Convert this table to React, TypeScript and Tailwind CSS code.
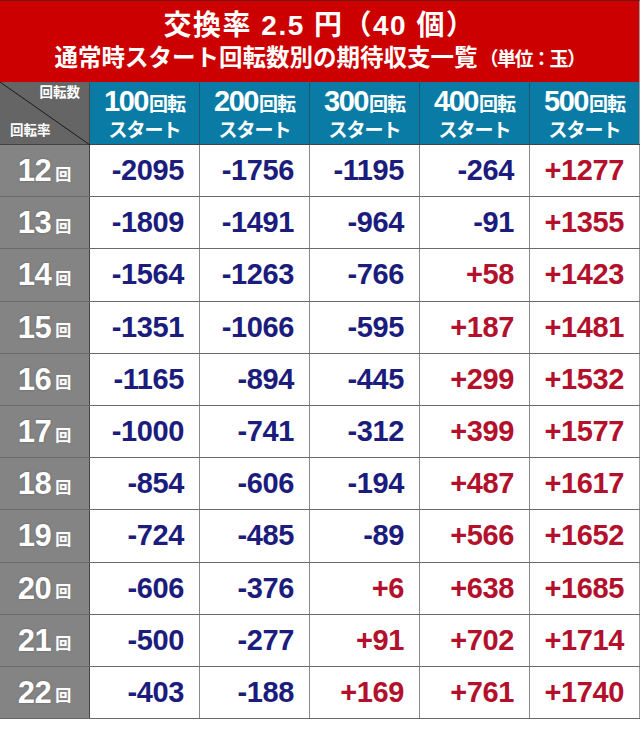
import React from 'react';

const cols = [100, 200, 300, 400, 500];

const rows: { rate: number; values: number[] }[] = [
  { rate: 12, values: [-2095, -1756, -1195, -264, 1277] },
  { rate: 13, values: [-1809, -1491, -964, -91, 1355] },
  { rate: 14, values: [-1564, -1263, -766, 58, 1423] },
  { rate: 15, values: [-1351, -1066, -595, 187, 1481] },
  { rate: 16, values: [-1165, -894, -445, 299, 1532] },
  { rate: 17, values: [-1000, -741, -312, 399, 1577] },
  { rate: 18, values: [-854, -606, -194, 487, 1617] },
  { rate: 19, values: [-724, -485, -89, 566, 1652] },
  { rate: 20, values: [-606, -376, 6, 638, 1685] },
  { rate: 21, values: [-500, -277, 91, 702, 1714] },
  { rate: 22, values: [-403, -188, 169, 761, 1740] },
];

const font = { fontFamily: '"Liberation Sans", "Noto Sans CJK JP", sans-serif' };

function formatValue(v: number) {
  return v > 0 ? `+${v}` : `${v}`;
}

export default function App() {
  return (
    <div className="w-[640px] h-[731px] bg-white font-bold" style={font}>
      {/* Title */}
      <div className="h-[82px] bg-[#cc0000] border-t border-[#7a1212] border-r border-r-[#9a9a9a] flex flex-col items-center text-white">
        <div className="mt-[7px] h-[36px] flex items-center text-[28px] leading-none tracking-[1.5px]">
          交換率 2.5 円（40 個）
        </div>
        <div className="h-[30px] flex items-center leading-none">
          <span className="text-[23.5px]">通常時スタート回転数別の期待収支一覧</span>
          <span className="text-[19px] ml-[2px] tracking-[-1.5px]">（単位：玉）</span>
        </div>
      </div>

      {/* Column header */}
      <div className="flex h-[63px] border-b border-[#444]">
        <div className="relative w-[90px] bg-[#656565] border-r border-[#444] text-white">
          <svg className="absolute inset-0" width="90" height="63" viewBox="0 0 90 63">
            <line x1="0" y1="0" x2="90" y2="63" stroke="#1a1a1a" strokeWidth="1" />
          </svg>
          <span className="absolute right-[9px] top-[4px] text-[13.5px] leading-none">回転数</span>
          <span className="absolute left-[10px] bottom-[7px] text-[13.5px] leading-none">回転率</span>
        </div>
        {cols.map((c, i) => (
          <div
            key={c}
            className={`w-[110px] bg-[#0a7ba5] flex flex-col items-center justify-center text-white ${i < 4 ? 'border-r border-[#1d5670]' : 'border-r border-[#9a9a9a]'}`}
          >
            <div className="flex items-baseline leading-none">
              <span className="text-[29px] tracking-[-1.5px]">{c}</span>
              <span className="text-[19px] ml-[1px] tracking-[-1px]">回転</span>
            </div>
            <div className="text-[19px] leading-none mt-[5px] tracking-[-1px]">スタート</div>
          </div>
        ))}
      </div>

      {/* Data rows */}
      {rows.map((r) => (
        <div key={r.rate} className="flex h-[52.2px] border-b border-[#6a6a6a]">
          <div className="w-[90px] bg-[#848484] border-r border-[#444] flex items-center justify-center text-white">
            <span className="text-[31px] leading-none tracking-[-0.5px] [text-shadow:0_0_2px_rgba(0,0,0,0.35)]">{r.rate}</span>
            <span className="text-[16px] leading-none ml-[4px] mt-[8px]">回</span>
          </div>
          {r.values.map((v, i) => (
            <div
              key={i}
              className={`w-[110px] flex items-center justify-end pr-[15px] border-r ${i < 4 ? 'border-[#8a8a8a]' : 'border-[#9a9a9a]'}`}
            >
              <span
                className={`text-[29px] leading-none tracking-[-0.4px] ${v > 0 ? 'text-[#b3102c]' : 'text-[#1b1c7c]'}`}
              >
                {formatValue(v)}
              </span>
            </div>
          ))}
        </div>
      ))}
    </div>
  );
}
